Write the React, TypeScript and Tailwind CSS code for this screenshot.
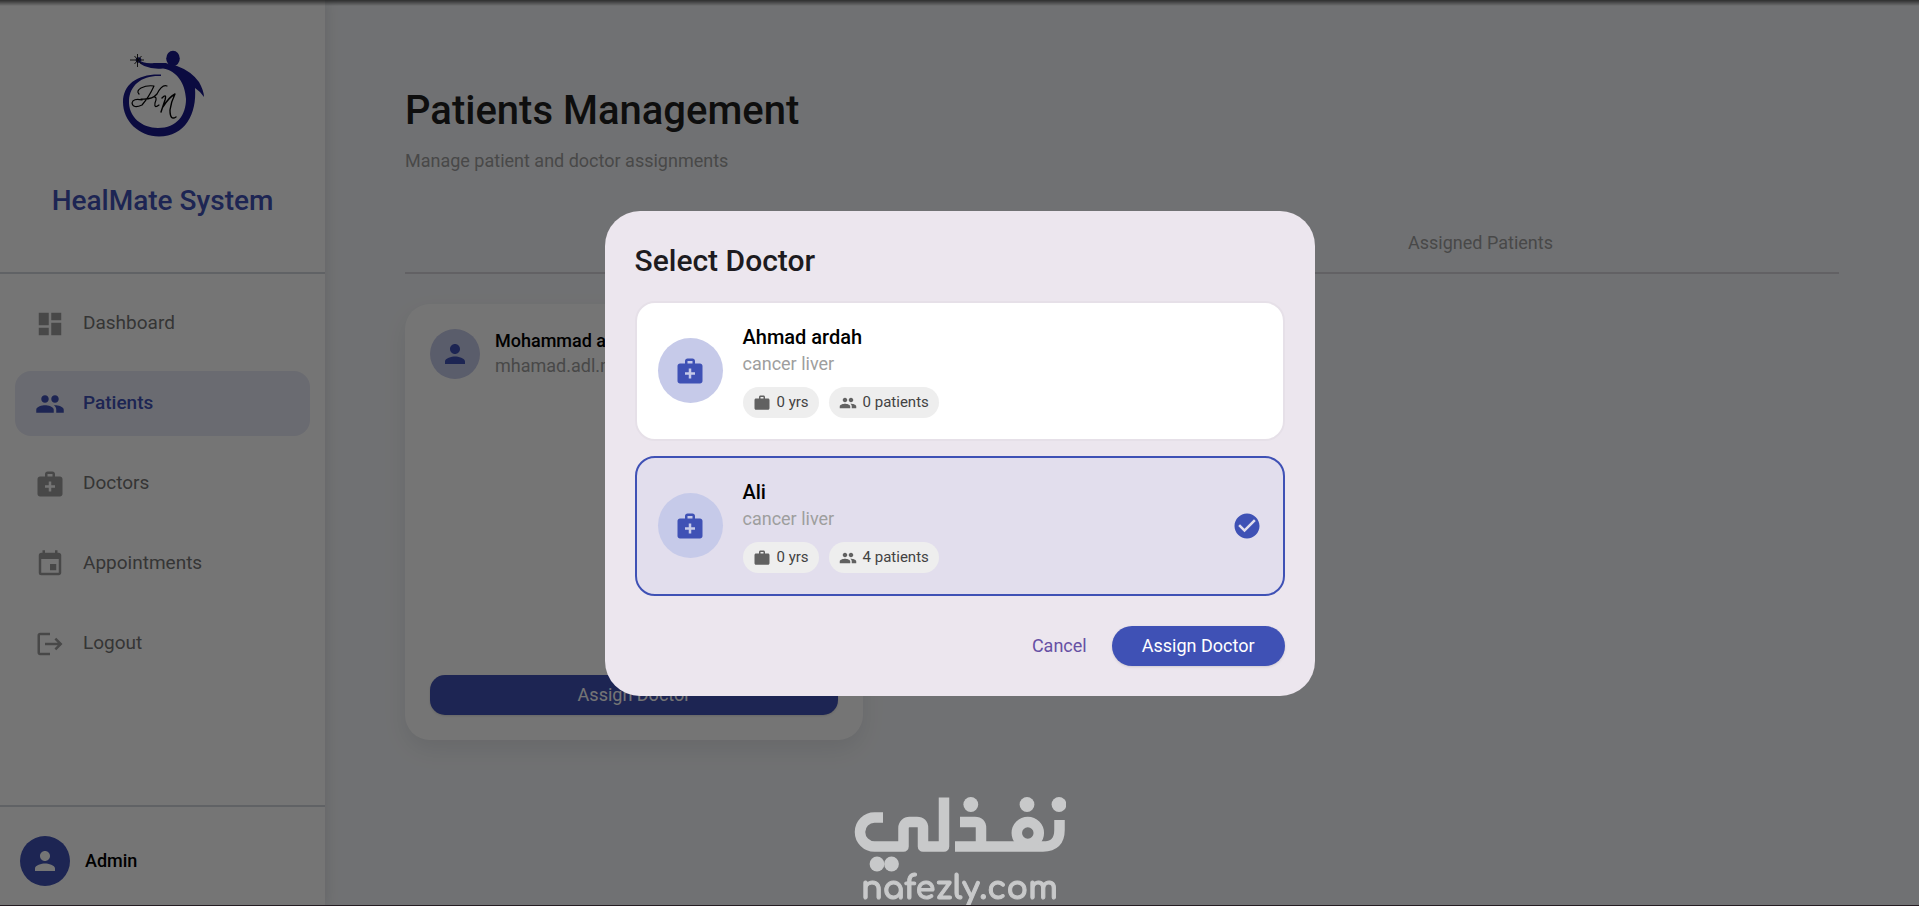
import { useState } from "react";
import {
  MdCheckCircle,
  MdDashboard,
  MdEvent,
  MdLogout,
  MdMedicalServices,
  MdPeople,
  MdPerson,
  MdWork,
} from "react-icons/md";
import clsx from "clsx";

const navLinks = [
  { href: "#dashboard", label: "Dashboard", icon: MdDashboard },
  { href: "#patients", label: "Patients", icon: MdPeople },
  { href: "#doctors", label: "Doctors", icon: MdMedicalServices },
  { href: "#appointments", label: "Appointments", icon: MdEvent },
  { href: "#logout", label: "Logout", icon: MdLogout },
];

const doctors = [
  { id: 1, name: "Ahmad ardah", specialty: "cancer liver", years: 0, patients: 0 },
  { id: 2, name: "Ali", specialty: "cancer liver", years: 0, patients: 4 },
];

function Logo() {
  return (
    <svg viewBox="0 0 100 100" className="h-[100px] w-[100px]" fill="none">
      <g fill="#1a1a8c">
        <ellipse cx="60" cy="14.500" rx="6.800" ry="7.700" />
        <path d="M24 15.500Q31 20 41 19L53 19L58 21L64 22Q78 27 86 38Q91 47 91 53Q88 48 82 44C84 70 72 92.500 46 92.500C26 92.500 10 77 10 58C10 40 25 29.500 48 30.500L48 32C29 31 17 41 16 56C15 73 29 84 45 84C64 84 73 71 73 55C72 39 64 27 50 24.500Q30 26 24 15.500Z" />
        <circle cx="25.500" cy="16" r="2.800" />
      </g>
      <path d="M17 16h14M24.500 10v13M21.500 12l7 8M28.500 12l-7 8" stroke="#111" strokeWidth=".9" />
      <g stroke="#000" strokeLinecap="round" strokeLinejoin="round">
        <path d="M26 50Q23 47 28 44Q34 41 41 42Q36 53 29 61Q20 65 19 59Q20 54 29 56M54 42Q49 40 44 50Q39 56 28 55M40 53Q45 52 42 59Q41 65 46 61" strokeWidth="1.200" />
        <path d="M49 54Q54 49 52 56L48 68M50 63Q56 53 62 50Q58 58 57 66Q57 77 63 73" strokeWidth="1.400" />
      </g>
    </svg>
  );
}

function Sidebar() {
  return (
    <aside className="z-10 flex w-[325px] shrink-0 flex-col bg-white shadow-[2px_0_12px_rgba(0,0,0,0.1)]">
      <div className="flex flex-col items-center border-b-2 border-gray-300 pt-11 pb-[51px]">
        <Logo />
        <h2 className="mt-[37px] text-[28px] leading-10 font-medium text-[#3f51b5]">HealMate System</h2>
      </div>

      <nav className="flex flex-1 flex-col gap-[15px] px-[15px] pt-[17px]">
        {navLinks.map(({ href, label, icon: Icon }) => (
          <a
            key={href}
            href={href}
            className={clsx(
              "flex h-[65px] items-center gap-[18px] rounded-2xl pl-5 text-[19px]",
              label === "Patients"
                ? "bg-[#e8eaf6] font-medium text-[#3f51b5]"
                : "text-[#757575]"
            )}
          >
            <Icon className={clsx("h-[30px] w-[30px]", label !== "Patients" && "text-[#9e9e9e]")} />
            {label}
          </a>
        ))}
      </nav>

      <div className="flex items-center gap-[15px] border-t-2 border-gray-300 px-5 pt-[29px] pb-5">
        <span className="flex h-[50px] w-[50px] items-center justify-center rounded-full bg-[#3f51b5] text-white">
          <MdPerson className="h-[30px] w-[30px]" />
        </span>
        <span className="text-lg font-medium text-black">Admin</span>
      </div>
    </aside>
  );
}

function PatientCard() {
  return (
    <article className="flex h-[436px] flex-col justify-between rounded-[25px] bg-white p-[25px] shadow-[0_10px_25px_rgba(0,0,0,0.08)]">
      <div className="flex items-start gap-[15px]">
        <span className="flex h-[50px] w-[50px] shrink-0 items-center justify-center rounded-full bg-[#c5cae9] text-[#3f51b5]">
          <MdPerson className="h-[30px] w-[30px]" />
        </span>
        <div>
          <h3 className="text-lg leading-6 font-medium text-black">Mohammad a</h3>
          <p className="text-lg leading-[26px] text-[#9e9e9e]">mhamad.adl.m</p>
        </div>
      </div>
      <button className="h-10 rounded-[15px] bg-[#3f51b5] text-lg text-white shadow-sm">
        Assign Doctor
      </button>
    </article>
  );
}

function DoctorOption({
  doctor,
  selected,
  onSelect,
}: {
  doctor: (typeof doctors)[number];
  selected: boolean;
  onSelect: () => void;
}) {
  return (
    <button
      onClick={onSelect}
      aria-pressed={selected}
      className={clsx(
        "flex h-[140px] w-full items-center gap-5 rounded-[20px] border-2 px-[21px] text-left",
        selected ? "border-[#3f51b5] bg-[#e2deed]" : "border-[#e6e0e8] bg-white"
      )}
    >
      <span className="flex h-[65px] w-[65px] items-center justify-center rounded-full bg-[#c6cae9] text-[#3f51b5]">
        <MdMedicalServices className="h-[30px] w-[30px]" />
      </span>
      <span className="flex-1">
        <span className="block text-xl leading-7 font-medium text-black">{doctor.name}</span>
        <span className="block text-lg leading-[26px] text-[#9e9e9e]">{doctor.specialty}</span>
        <span className="mt-2.5 flex gap-2.5 text-[15px] text-[#424242]">
          <span className="flex h-[31px] items-center gap-1.5 rounded-full bg-[#eeeeee] px-2.5">
            <MdWork className="h-[18px] w-[18px] text-[#616161]" />
            {doctor.years} yrs
          </span>
          <span className="flex h-[31px] items-center gap-1.5 rounded-full bg-[#eeeeee] px-2.5">
            <MdPeople className="h-[18px] w-[18px] text-[#616161]" />
            {doctor.patients} patients
          </span>
        </span>
      </span>
      {selected && <MdCheckCircle className="h-[30px] w-[30px] text-[#3f51b5]" />}
    </button>
  );
}

function SelectDoctorDialog() {
  const [selectedId, setSelectedId] = useState(2);

  return (
    <div className="fixed inset-0 z-20 flex items-center justify-center bg-black/54">
      <div
        role="dialog"
        aria-labelledby="select-doctor"
        className="w-[710px] rounded-[35px] bg-[#ece6ee] p-[30px]"
      >
        <h2 id="select-doctor" className="text-[30px] leading-10 font-medium text-[#1d1b20]">
          Select Doctor
        </h2>
        <div className="mt-5 flex flex-col gap-[15px]">
          {doctors.map((doctor) => (
            <DoctorOption
              key={doctor.id}
              doctor={doctor}
              selected={doctor.id === selectedId}
              onSelect={() => setSelectedId(doctor.id)}
            />
          ))}
        </div>
        <div className="mt-[30px] flex justify-end gap-2.5 text-lg">
          <button className="px-[15px] text-[#6750a4]">Cancel</button>
          <button className="h-10 rounded-full bg-[#3f51b5] px-[30px] text-white shadow-sm">
            Assign Doctor
          </button>
        </div>
      </div>
    </div>
  );
}

function Watermark() {
  return (
    <div className="pointer-events-none fixed bottom-0 left-1/2 z-30 flex -translate-x-1/2 flex-col items-center text-[#c8c9ca]">
      <svg viewBox="0 0 212 76" className="h-[76px] w-[212px]" fill="none">
        <g stroke="currentColor" strokeWidth="10.500" strokeLinejoin="round">
          <path d="M29 21.500H20.500A14.500 14.500 0 0 0 20.500 50.500H49.500V32A6 6 0 0 1 55.500 26H63Q69 26 69 32V50.500H90V1.500" />
          <path d="M106 26H121Q127 26 127 32V50.500M101 50.500H189Q205.500 50.500 205.500 34V24" />
          <circle cx="173.800" cy="37" r="11" />
        </g>
        <g fill="currentColor">
          <circle cx="116.800" cy="8.500" r="7.400" />
          <circle cx="173" cy="8.500" r="7.400" />
          <circle cx="205" cy="8.500" r="7.400" />
          <circle cx="23" cy="68" r="7.400" />
          <circle cx="37.500" cy="68" r="7.400" />
        </g>
      </svg>
      <span className="font-['Comfortaa','Lato',sans-serif] text-[32px] leading-[34px] font-bold [-webkit-text-stroke:1px_currentColor]">
        nafezly.com
      </span>
    </div>
  );
}

export default function App() {
  return (
    <div className="flex min-h-screen bg-[#f5f7fa] font-['Roboto',sans-serif]">
      <Sidebar />

      <main className="flex-1 px-20 pt-[81px]">
        <h1 className="text-[40px] leading-[60px] font-medium text-[#1f1f1f]">Patients Management</h1>
        <p className="mt-[7px] text-lg leading-[26px] text-[#9e9e9e]">Manage patient and doctor assignments</p>

        <div role="tablist" className="mt-10 grid h-[60px] grid-cols-2 border-b-2 border-[#d5d3da]">
          <span />
          <button role="tab" className="text-lg text-[#9e9e9e]">
            Assigned Patients
          </button>
        </div>

        <div className="mt-[30px] grid grid-cols-3 gap-[30px]">
          <PatientCard />
        </div>
      </main>

      <SelectDoctorDialog />
      <Watermark />
      {/* Window edges */}
      <div className="fixed inset-x-0 top-0 z-40 h-1.5 bg-linear-to-b from-black/60 to-transparent" />
      <div className="fixed inset-x-0 bottom-0 z-40 h-px bg-[#241c22]" />
    </div>
  );
}
